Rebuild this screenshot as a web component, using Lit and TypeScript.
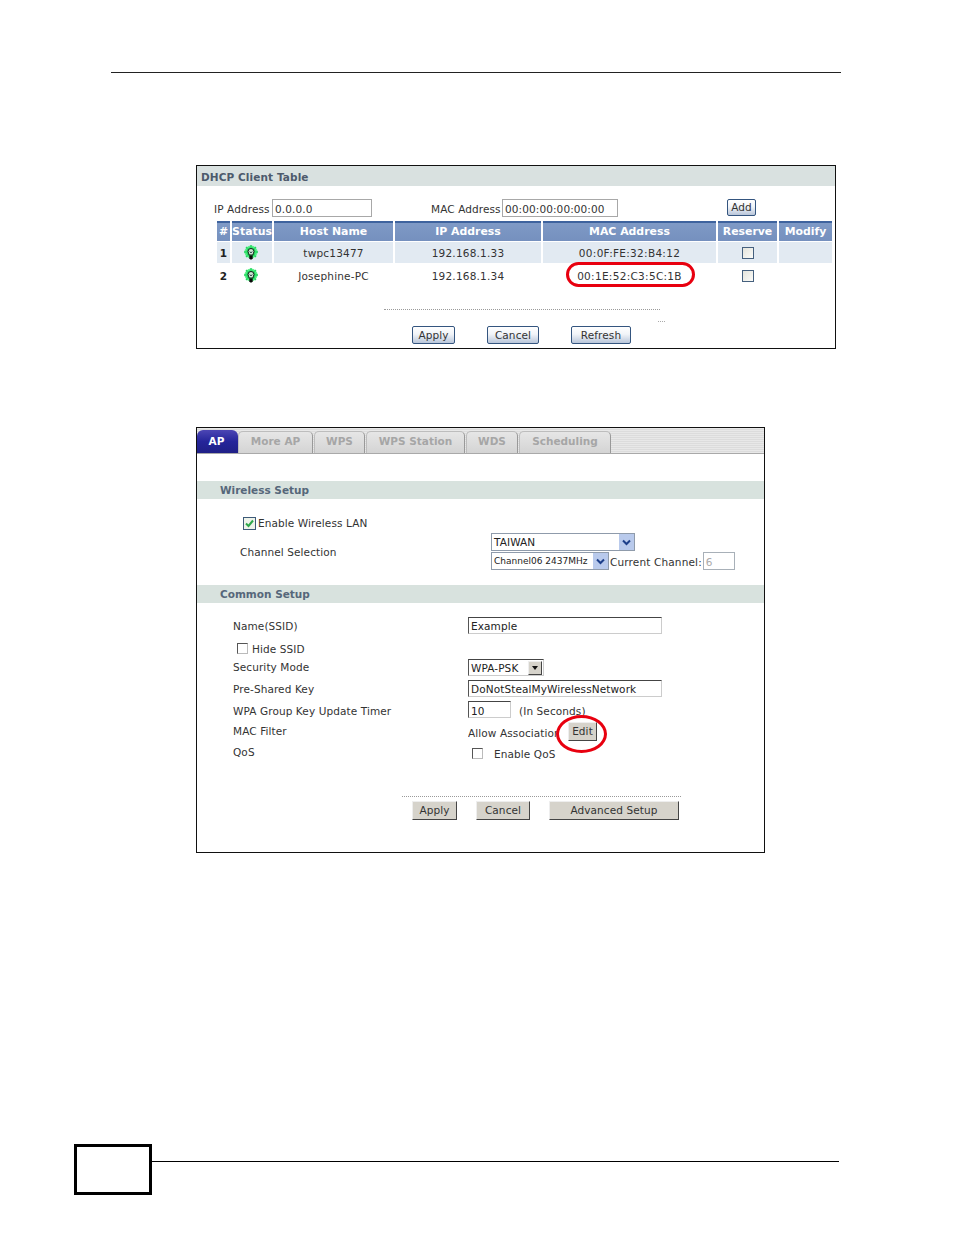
import { LitElement, html, css } from 'lit';
import { customElement } from 'lit/decorators.js';

const TABS = ['More AP', 'WPS', 'WPS Station', 'WDS', 'Scheduling'];
const TAB_WIDTHS = [75, 51, 99, 52, 92];

const CLIENTS = [
    { n: '1', host: 'twpc13477', ip: '192.168.1.33', mac: '00:0F:FE:32:B4:12' },
    { n: '2', host: 'Josephine-PC', ip: '192.168.1.34', mac: '00:1E:52:C3:5C:1B' },
];

@customElement('app-root')
export class AppRoot extends LitElement {
    static styles = css`
:host {
    display: block;
    width: 954px;
    height: 1235px;
    background: #fff;
    font-family: "DejaVu Sans", Verdana, sans-serif;
    font-size: 10.5px;
    letter-spacing: 0.1px;
    color: #333;
    overflow: hidden;
}

.head-rule {
    height: 1px;
    margin: 72px 113px 0 111px;
    background: #222;
}

.panel {
    box-sizing: border-box;
    margin-left: 196px;
    border: 1px solid #111;
    background: #fff;
}

.dhcp {
    width: 640px;
    height: 184px;
    margin-top: 92px;
}

.ap {
    width: 569px;
    height: 426px;
    margin-top: 78px;
}

.title {
    height: 20px;
    line-height: 23px;
    padding-left: 4px;
    background: #d9e1e0;
    font-weight: bold;
    font-size: 10.5px;
    color: #4d5a6c;
}

.filter {
    display: flex;
    align-items: center;
    height: 18px;
    margin-top: 13px;
    white-space: nowrap;
}

.filter-label {
    padding-top: 2px;
}

.box {
    box-sizing: border-box;
    height: 18px;
    line-height: 18px;
    padding-left: 2px;
    border: 1px solid #a8a8a8;
    background: #fff;
    overflow: hidden;
    white-space: nowrap;
}

.clients {
    display: grid;
    grid-template-columns: 13px 40px 119px 146px 173px 59px 53px;
    grid-template-rows: 20px 21px 22px;
    column-gap: 2px;
    row-gap: 1px;
    margin: 4px 0 0 20px;
    width: 615px;
}

.th {
    box-sizing: border-box;
    border-top: 2px solid #3e639e;
    background: linear-gradient(#7f9ac6, #7590be);
    color: #fff;
    font-weight: bold;
    font-size: 10.9px;
    letter-spacing: 0;
    line-height: 18px;
    text-align: center;
    white-space: nowrap;
}

.td {
    position: relative;
    box-sizing: border-box;
    display: flex;
    align-items: center;
    justify-content: center;
    letter-spacing: 0.2px;
    padding-top: 1px;
    white-space: nowrap;
}

.td.mac {
    letter-spacing: 0.3px;
}

.shade {
    background: #e2eaf2;
    padding-top: 0;
}

.num {
    font-weight: bold;
    color: #222;
}

.lamp {
    display: block;
    margin-right: 2px;
}

.check {
    box-sizing: border-box;
    display: block;
    flex: none;
    width: 12px;
    height: 12px;
    border: 1px solid #45607e;
    background: linear-gradient(135deg, #e4e4dc, #fbfbf8);
}

.check.plain {
    width: 11px;
    height: 11px;
    border-color: #555 #bbb #bbb #555;
    background: #fff;
}

.pill {
    position: absolute;
    left: 23px;
    top: -2px;
    width: 129px;
    height: 25px;
    box-sizing: border-box;
    border: 3px solid #e8000f;
    border-radius: 13px;
}

.dots {
    height: 0;
    border-top: 1px dotted #9a9a9a;
}

.dhcp .dots {
    width: 276px;
    margin: 23px 0 0 187px;
}

.stub {
    width: 7px;
    height: 0;
    margin: 11px 0 0 461px;
    border-top: 1px dotted #aaa;
}

.actions {
    display: flex;
    margin-top: 4px;
}

.btn {
    box-sizing: border-box;
    flex: none;
    display: flex;
    align-items: center;
    justify-content: center;
    height: 18px;
    padding-bottom: 1px;
    border: 1px solid #34557f;
    border-radius: 2px;
    background: linear-gradient(#fff, #f1f4f8 45%, #b9c6da);
    color: #333;
    white-space: nowrap;
}

.btn.add {
    width: 29px;
    height: 17px;
    margin-left: 109px;
    align-self: flex-start;
}

.btn.grey {
    height: 19px;
    border: 1px solid;
    border-color: #eee #444 #444 #eee;
    border-radius: 0;
    background: #d6d3cb;
}

.tabs {
    display: flex;
    align-items: flex-end;
    box-sizing: border-box;
    height: 26px;
    border-bottom: 1px solid #a9a9a9;
    background: repeating-linear-gradient(#e8e8e8 0 1px, #dcdcdc 1px 2px);
}

.tab {
    box-sizing: border-box;
    height: 22px;
    margin-right: 1px;
    border: 1px solid #bdbdbd;
    border-bottom: none;
    border-right-color: #999;
    border-radius: 5px 5px 0 0;
    background: linear-gradient(#e6e6e6, #d4d4d4);
    color: #a6a6a6;
    font-weight: bold;
    font-size: 10.5px;
    letter-spacing: 0;
    line-height: 19px;
    text-align: center;
}

.tab.on {
    width: 41px;
    height: 23px;
    padding-right: 2px;
    margin-right: 0;
    border: none;
    border-radius: 6px 6px 0 0;
    background: linear-gradient(#4c46b4, #25259a 50%, #1f1f86);
    color: #fff;
    line-height: 22px;
}

.bar {
    height: 18px;
    line-height: 19px;
    padding-left: 23px;
    background: #d8e2de;
    color: #56677a;
    font-weight: bold;
    font-size: 10.5px;
    letter-spacing: 0;
}

.bar.first {
    margin-top: 27px;
}

.enable {
    display: flex;
    align-items: center;
    gap: 2px;
    height: 14px;
    margin: 17px 0 3px 46px;
}

.tick {
    display: block;
    flex: none;
    width: 13px;
    height: 13px;
}

.channel {
    display: flex;
    align-items: center;
    height: 37px;
    margin-bottom: 15px;
}

.channel-label {
    width: 251px;
    padding-left: 43px;
    padding-top: 1px;
}

.stack {
    display: flex;
    flex-direction: column;
    gap: 1px;
}

.stack-row {
    display: flex;
    align-items: center;
}

.current {
    margin-left: 1px;
    padding-top: 2px;
    letter-spacing: 0.15px;
}

.select {
    box-sizing: border-box;
    display: flex;
    align-items: center;
    justify-content: space-between;
    flex: none;
    height: 18px;
    padding-left: 2px;
    border: 1px solid #8f9bab;
    background: #fff;
    color: #222;
    white-space: nowrap;
}

.narrow {
    font-size: 9px;
    letter-spacing: 0;
}

.arrow {
    display: flex;
    align-items: center;
    justify-content: center;
    width: 15px;
    height: 16px;
    background: #b9caec;
}

.arrow svg {
    display: block;
    width: 9px;
    height: 7px;
}

.grey-arrow {
    width: 14px;
    height: 14px;
    margin-right: 1px;
    background: #d6d3cb;
    border: 1px solid;
    border-color: #eee #444 #444 #eee;
    box-sizing: border-box;
}

.grey-arrow::before {
    content: '';
    display: block;
    width: 0;
    margin: 4px auto 0;
    border: 3.5px solid transparent;
    border-top: 4px solid #111;
    border-bottom: none;
}

.disabled {
    margin-left: 1px;
    color: #aaa;
    border-color: #a8b0b8;
}

.form {
    display: flex;
    flex-direction: column;
    gap: 4px;
    padding-top: 14px;
}

.row {
    display: flex;
    align-items: center;
    height: 17px;
    white-space: nowrap;
}

.row.edit-row {
    height: 19px;
}

.row.qos {
    height: 16px;
}

.label {
    box-sizing: border-box;
    flex: none;
    width: 271px;
    padding-left: 36px;
}

.up {
    padding-bottom: 2px;
}

.down {
    padding-top: 2px;
}

.inset {
    box-sizing: border-box;
    flex: none;
    height: 17px;
    line-height: 16px;
    padding-left: 2px;
    border: 1px solid;
    border-color: #444 #ccc #ccc #555;
    background: #fff;
    color: #222;
}

.hide {
    display: flex;
    align-items: center;
    gap: 4px;
    padding: 4px 0 0 40px;
}

.seconds {
    margin-left: 8px;
    padding-top: 2px;
}

.clip {
    width: 89px;
    overflow: hidden;
    padding-top: 3px;
}

.edit {
    position: relative;
    margin-left: 11px;
}

.oval {
    position: absolute;
    left: -13px;
    top: -8px;
    width: 51px;
    height: 38px;
    box-sizing: border-box;
    border: 3px solid #e8000f;
    border-radius: 50%;
}

.ap .dots {
    width: 279px;
    margin: 35px 0 0 205px;
}

.footer {
    display: flex;
    height: 51px;
    margin: 291px 0 0 74px;
}

.page-box {
    box-sizing: border-box;
    width: 78px;
    height: 51px;
    border: 3px solid #000;
}

.foot-rule {
    width: 687px;
    height: 1px;
    margin-top: 17px;
    background: #000;
}
`;

    private bulb() {
        return html`<svg class="lamp" width="16" height="16" viewBox="0 0 16 16">
    <circle cx="8" cy="7" r="6.500" fill="#5cf08a"></circle>
    <circle cx="8" cy="7" r="4.800" fill="#22d860"></circle>
    <path d="M8 0v2M1 7h2M13 7h2M3 2l1.500 1.500M13 2l-1.500 1.500M3 12l1.500-1.500M13 12l-1.500-1.500" stroke="#22d860" stroke-width="1.400"></path>
    <path d="M5 6.500a3 3 0 0 1 6 0c0 1.300-1 2-1.200 3.500H6.200C6 8.500 5 7.800 5 6.500Z" fill="#cfe8d4" stroke="#0b1a12" stroke-width="1"></path>
    <path d="M6.300 10.500h3.400v3l-1 1h-1.400l-1-1Z" fill="#0a0a0a"></path>
    <path d="M6.600 6.500l1.400 1.300 1.400-1.300" fill="none" stroke="#123" stroke-width=".9"></path>
</svg>`;
    }

    private chevron() {
        return html`<span class="arrow"><svg viewBox="0 0 9 7">
    <path d="M1 1.500l3.500 3.500L8 1.500" fill="none" stroke="#1d3f8a" stroke-width="2"></path>
</svg></span>`;
    }

    private clientRow(c: typeof CLIENTS[number], shade: boolean) {
        const cls = shade ? 'td shade' : 'td';
        return html`
<div class="${cls} num">${c.n}</div>
<div class="${cls}">${this.bulb()}</div>
<div class="${cls}">${c.host}</div>
<div class="${cls}">${c.ip}</div>
<div class="${cls} mac">${c.mac}${shade ? null : html`<span class="pill"></span>`}</div>
<div class="${cls}"><span class="check"></span></div>
<div class="${cls}"></div>`;
    }

    render() {
        return html`
<div class="head-rule"></div>

<section class="panel dhcp">
    <div class="title">DHCP Client Table</div>
    <div class="filter">
        <span class="filter-label" style="margin-left:17px;width:58px">IP Address</span>
        <div class="box" style="width:100px">0.0.0.0</div>
        <span class="filter-label" style="margin-left:59px;width:71px">MAC Address</span>
        <div class="box" style="width:116px">00:00:00:00:00:00</div>
        <div class="btn add">Add</div>
    </div>
    <div class="clients">
        ${['#', 'Status', 'Host Name', 'IP Address', 'MAC Address', 'Reserve', 'Modify'].map(
                    (h) => html`<div class="th">${h}</div>`
                )}
        ${CLIENTS.map((c, i) => this.clientRow(c, i === 0))}
    </div>
    <div class="dots"></div>
    <div class="stub"></div>
    <div class="actions" style="margin-left:215px">
        <div class="btn" style="width:43px">Apply</div>
        <div class="btn" style="width:52px;margin-left:32px">Cancel</div>
        <div class="btn" style="width:60px;margin-left:32px">Refresh</div>
    </div>
</section>

<section class="panel ap">
    <div class="tabs">
        <div class="tab on">AP</div>
        ${TABS.map(
                    (t, i) => html`<div class="tab" style="width:${TAB_WIDTHS[i]}px">${t}</div>`
                )}
    </div>
    <div class="bar first">Wireless Setup</div>
    <div class="enable">
        <svg class="tick" viewBox="0 0 13 13">
            <rect x=".5" y=".5" width="12" height="12" fill="#eef3ea" stroke="#3d5a78"></rect>
            <path d="M3 6.500l2.500 2.500L10 3.500" fill="none" stroke="#2fa84a" stroke-width="2"></path>
        </svg>
        <span>Enable Wireless LAN</span>
    </div>
    <div class="channel">
        <div class="channel-label">Channel Selection</div>
        <div class="stack">
            <div class="select" style="width:144px">TAIWAN${this.chevron()}</div>
            <div class="stack-row">
                <div class="select narrow" style="width:118px">Channel06 2437MHz${this.chevron()}</div>
                <span class="current">Current Channel:</span>
                <div class="box disabled" style="width:32px">6</div>
            </div>
        </div>
    </div>
    <div class="bar">Common Setup</div>
    <div class="form">
        <div class="row">
            <div class="label">Name(SSID)</div>
            <div class="inset" style="width:194px">Example</div>
        </div>
        <div class="row">
            <div class="hide"><span class="check plain"></span><span>Hide SSID</span></div>
        </div>
        <div class="row">
            <div class="label up">Security Mode</div>
            <div class="inset select" style="width:76px">WPA-PSK<span class="grey-arrow"></span></div>
        </div>
        <div class="row">
            <div class="label">Pre-Shared Key</div>
            <div class="inset" style="width:194px">DoNotStealMyWirelessNetwork</div>
        </div>
        <div class="row">
            <div class="label down">WPA Group Key Update Timer</div>
            <div class="inset" style="width:43px;line-height:18px">10</div>
            <span class="seconds">(In Seconds)</span>
        </div>
        <div class="row edit-row">
            <div class="label up">MAC Filter</div>
            <div class="clip">Allow Association</div>
            <div class="btn grey edit" style="width:29px">Edit<span class="oval"></span></div>
        </div>
        <div class="row qos">
            <div class="label up">QoS</div>
            <span class="check plain" style="margin-left:4px"></span>
            <span style="margin-left:11px;padding-top:2px">Enable QoS</span>
        </div>
    </div>
    <div class="dots"></div>
    <div class="actions" style="margin-left:215px">
        <div class="btn grey" style="width:45px">Apply</div>
        <div class="btn grey" style="width:54px;margin-left:19px">Cancel</div>
        <div class="btn grey" style="width:130px;margin-left:19px">Advanced Setup</div>
    </div>
</section>

<div class="footer">
    <div class="page-box"></div>
    <div class="foot-rule"></div>
</div>
`;
    }
}
